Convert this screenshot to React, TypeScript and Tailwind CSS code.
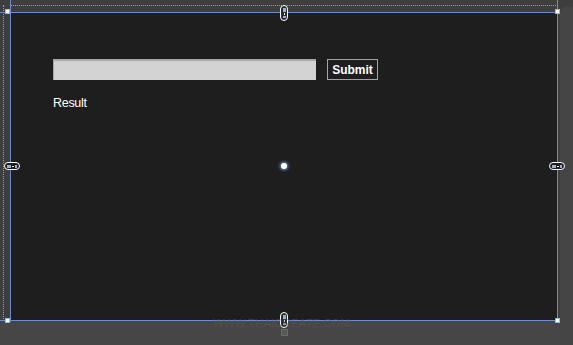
import React from 'react';

function SideHandle({ className }: { className: string }) {
  return (
    <div className={`absolute flex items-center gap-[1px] rounded-full border border-white bg-[#1e1e1e] px-[2px] ${className}`}>
      <div className="h-[3px] w-[4px] bg-[#8fb0ee]" />
      <div className="h-[1px] w-[2px] bg-white" />
      <div className="h-[3px] w-[2px] bg-[#8fb0ee]" />
    </div>
  );
}

function VertHandle({ className }: { className: string }) {
  return (
    <div className={`absolute flex flex-col items-center gap-[1px] rounded-full border border-white bg-[#2a2a2a] py-[2px] ${className}`}>
      <div className="h-[4px] w-[3px] bg-[#8fb0ee]" />
      <div className="h-[2px] w-[1px] bg-white" />
      <div className="h-[2px] w-[3px] bg-[#8fb0ee]" />
    </div>
  );
}

export default function App() {
  return (
    <div className="relative w-[573px] h-[345px] overflow-hidden bg-[#3e3e3e] font-['Liberation_Sans',Arial,sans-serif]">
      <div className="flex h-full flex-col">
        <div className="h-[13px]" />
        <div className="flex">
          <div className="w-[11px]" />
          {/* Design surface */}
          <div className="flex h-[308px] w-[546px] flex-col bg-[#1e1e1e] pl-[42px] pt-[46px]">
            <div className="flex items-start gap-[11px]">
              <div className="h-[21px] w-[263px] border-t-2 border-l border-[#a8a8a8] bg-[#d3d3d3]" />
              <div className="flex h-[21px] w-[51px] items-center justify-center border border-[#a3a3a3] text-[12px] font-bold text-white">
                Submit
              </div>
            </div>
            <div className="mt-[14px] text-[12.5px] tracking-[-0.3px] text-white">Result</div>
          </div>
          <div className="flex-1" />
        </div>
        <div className="flex-1 bg-[#464646]" />
      </div>

      {/* right band */}
      <div className="absolute right-0 top-[7px] bottom-0 w-[13px] rounded-tl-[6px] bg-[#454545]" />

      {/* dotted guides */}
      <div className="absolute left-[10px] top-[5px] w-[548px] border-t border-dotted border-[#8a9cc0]" />
      <div className="absolute left-[3px] top-[5px] h-[316px] border-l border-dotted border-[#8a9cc0]" />

      {/* selection lines */}
      <div className="absolute left-[10px] top-0 h-[322px] w-px bg-[#6f8ccc]" />
      <div className="absolute left-[557px] top-0 h-[322px] w-px bg-[#6f8ccc]" />
      <div className="absolute left-0 top-[12px] h-px w-[558px] bg-[#6f8ccc]" />
      <div className="absolute left-0 top-[320px] h-px w-[558px] bg-[#6f8ccc]" />

      {/* corner handles */}
      <div className="absolute left-[5px] top-[9px] h-[5px] w-[5px] border border-[#9fb6e6] bg-white" />
      <div className="absolute left-[555px] top-[9px] h-[5px] w-[5px] border border-[#9fb6e6] bg-white" />
      <div className="absolute left-[5px] top-[318px] h-[5px] w-[5px] border border-[#9fb6e6] bg-white" />
      <div className="absolute left-[555px] top-[318px] h-[5px] w-[5px] border border-[#9fb6e6] bg-white" />

      {/* side handles */}
      <SideHandle className="left-[4px] top-[162px] h-[8px]" />
      <SideHandle className="left-[549px] top-[162px] h-[8px]" />
      <VertHandle className="left-[280px] top-[5px] w-[8px]" />
      <VertHandle className="left-[280px] top-[312px] w-[8px]" />
      <div className="absolute left-[281px] top-[329px] h-[7px] w-[7px] border border-[#6a6a6a] bg-[#575757]" />

      {/* center point */}
      <div className="absolute left-[281px] top-[163px] h-[6px] w-[6px] rounded-full bg-white shadow-[0_0_3px_1px_#6d8fe0]" />

      {/* watermark */}
      <div className="absolute left-[213px] top-[315px] text-[11.5px] text-[#5a5a5a] opacity-50">
        WWW.THAICREATE.COM
      </div>
    </div>
  );
}
